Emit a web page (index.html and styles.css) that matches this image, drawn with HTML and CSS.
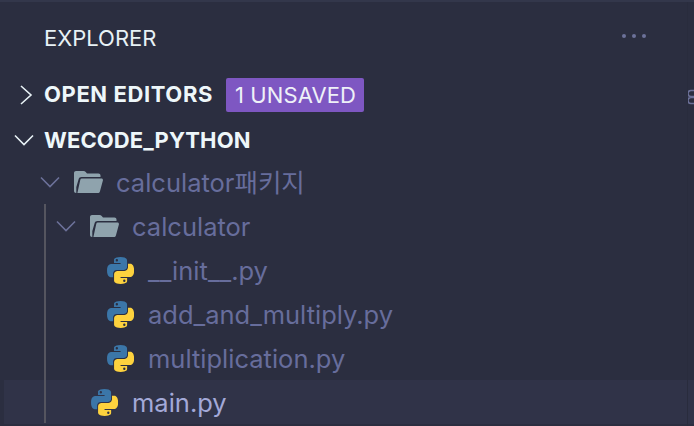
FILE: index.html
```html
<!DOCTYPE html>
<html lang="en">

<head>
    <meta charset="UTF-8">
    <title>Explorer</title>
    <link rel="stylesheet" href="styles.css">
</head>

<body>
    <svg class="defs" width="0" height="0">
        <symbol id="py" viewBox="0 0 110 110">
            <path fill="#3b76a8" d="M54.9 0C26.9 0 28.6 12.2 28.6 12.2v12.6h26.7v3.8H18S.1 26.6.1 54.8C.1 83 15.7 82 15.7 82H25V69s-.5-15.6 15.4-15.6h26.5s14.9.2 14.9-14.4V14.8S84.2 0 54.9 0zM40.1 8.5a4.8 4.8 0 1 1 0 9.6 4.8 4.8 0 0 1 0-9.6z" />
            <path fill="#fdd23e" d="M55.7 110c28 0 26.3-12.2 26.3-12.2V85.2H55.3v-3.8h37.3s17.9 2 17.9-26.2c0-28.2-15.6-27.2-15.6-27.2h-9.3V41s.5 15.6-15.4 15.6H43.7s-14.9-.2-14.9 14.4v24.2S26.4 110 55.7 110zm14.8-8.5a4.8 4.8 0 1 1 0-9.6 4.8 4.8 0 0 1 0 9.6z" />
        </symbol>
        <symbol id="folder" viewBox="0 0 29 22">
            <path fill="#8fa3ad" d="M2 0h7.500c1 0 1.600.4 2.200 1l1.300 1.500h11.500c1.100 0 2 .9 2 2V6H7.500C6 6 5 6.800 4.600 8.200L2.200 16.500V7.500h.1V22H2c-1.100 0-2-.9-2-2V2C0 .9.900 0 2 0z" />
            <path fill="#8fa3ad" d="M7.800 7.600H27.500c1 0 1.700 1 1.400 1.900l-3 10.900c-.3 1-1.100 1.600-2.100 1.600H3.400l2.900-13.200c.2-.8.700-1.200 1.500-1.200z" />
        </symbol>
    </svg>

    <aside class="sidebar">
        <header class="title-bar">
            <span class="title">EXPLORER</span>
            <span class="dots"><i></i><i></i><i></i></span>
        </header>

        <div class="section section-open">
            <svg class="chev" viewBox="0 0 20 20"><path d="M5 1l10 9-10 9" /></svg>
            <span class="section-name">OPEN EDITORS</span>
            <span class="badge">1 UNSAVED</span>
            <svg class="clipped" viewBox="0 0 6 16"><path d="M6 1.500H3a2 2 0 0 0 0 6h3M6 8.500H3a2 2 0 0 0 0 6h3" /></svg>
        </div>

        <div class="section section-root">
            <svg class="chev" viewBox="0 0 20 20"><path d="M1 5.500l9 9 9-9" /></svg>
            <span class="section-name">WECODE_PYTHON</span>
        </div>

        <div class="tree">
            <div class="guide"></div>
            <div class="row depth-1">
                <svg class="chev dim" viewBox="0 0 20 20"><path d="M1 5.500l9 9 9-9" /></svg>
                <svg class="folder"><use href="#folder" /></svg>
                <span>calculator패키지</span>
            </div>
            <div class="row depth-2">
                <svg class="chev dim" viewBox="0 0 20 20"><path d="M1 5.500l9 9 9-9" /></svg>
                <svg class="folder"><use href="#folder" /></svg>
                <span>calculator</span>
            </div>
            <div class="row depth-3">
                <svg class="py"><use href="#py" /></svg>
                <span>__init__.py</span>
            </div>
            <div class="row depth-3">
                <svg class="py"><use href="#py" /></svg>
                <span>add_and_multiply.py</span>
            </div>
            <div class="row depth-3">
                <svg class="py"><use href="#py" /></svg>
                <span>multiplication.py</span>
            </div>
            <div class="row selected">
                <svg class="py"><use href="#py" /></svg>
                <span>main.py</span>
            </div>
        </div>
    </aside>
</body>

</html>
```

FILE: styles.css
```css
* {
    box-sizing: border-box;
}

html,
body {
    height: 100%;
}

body {
    margin: 0;
    background: #2b2e40;
    font-family: Inter, "Noto Sans CJK KR", sans-serif;
    overflow: hidden;
}

.defs {
    display: block;
    height: 0;
}

.sidebar {
    position: relative;
    height: 426px;
    border-top: 2px solid #33374b;
    overflow: hidden;
}

/* thin edge of the next panel */
.sidebar::after {
    content: "";
    position: absolute;
    top: 0;
    bottom: 0;
    left: 687px;
    width: 1px;
    background: #292c3d;
}

.title-bar {
    display: flex;
    align-items: center;
    justify-content: space-between;
    height: 72px;
    padding: 0 48px 0 44px;
}

.title {
    color: #e8f2f6;
    font-size: 22px;
}

.dots {
    display: flex;
    gap: 6px;
    margin-top: -4px;
}

.dots i {
    width: 4px;
    height: 4px;
    border-radius: 50%;
    background: #6c7199;
}

.section {
    display: flex;
    align-items: center;
    height: 44px;
    color: #eef7fa;
    font-size: 22px;
    font-weight: 700;
}

.section-open {
    padding-left: 16px;
    margin-top: -1px;
    margin-bottom: 1px;
    letter-spacing: .6px;
}

.section-open .section-name {
    margin-top: -2px;
}

.section-root {
    padding-left: 14px;
    letter-spacing: .1px;
}

.section-name {
    margin-left: 11px;
}

.section-root .section-name {
    margin-left: 10px;
}

.chev {
    width: 20px;
    height: 20px;
    flex: none;
    fill: none;
    stroke: #e8f2f6;
    stroke-width: 1.6;
}

.section-open .chev {
    margin-right: -3px;
}

.chev.dim {
    stroke: #6c7199;
}

.badge {
    margin-left: 13px;
    padding: 2px 8px 2px 9px;
    border-radius: 2px;
    background: #7e57c2;
    color: #eef1f8;
    font-size: 22px;
    font-weight: 400;
    letter-spacing: .1px;
    line-height: 30px;
}

.clipped {
    width: 6px;
    height: 16px;
    margin-left: auto;
    margin-top: 3px;
    fill: none;
    stroke: #6c7199;
    stroke-width: 1.6;
}

.tree {
    position: relative;
    margin-top: -2px;
}

.guide {
    position: absolute;
    left: 44px;
    top: 44px;
    width: 2px;
    height: 219px;
    background: #55555f;
    z-index: 1;
}

.row {
    display: flex;
    align-items: center;
    height: 44px;
    color: #676d9c;
    font-size: 25.5px;
    line-height: 32px;
}

.row span {
    padding-top: 2px;
}

.depth-1 {
    padding-left: 40px;
}

.depth-2 {
    padding-left: 56px;
}

.depth-3 {
    padding-left: 107px;
}

.row .folder {
    width: 29px;
    height: 22px;
    margin-left: 14px;
    margin-right: 13px;
}

.py {
    width: 27px;
    height: 27px;
    margin-right: 14px;
}

.selected {
    margin-left: 4px;
    padding-left: 87px;
    background: #303348;
    color: #a3a9d8;
}
```
